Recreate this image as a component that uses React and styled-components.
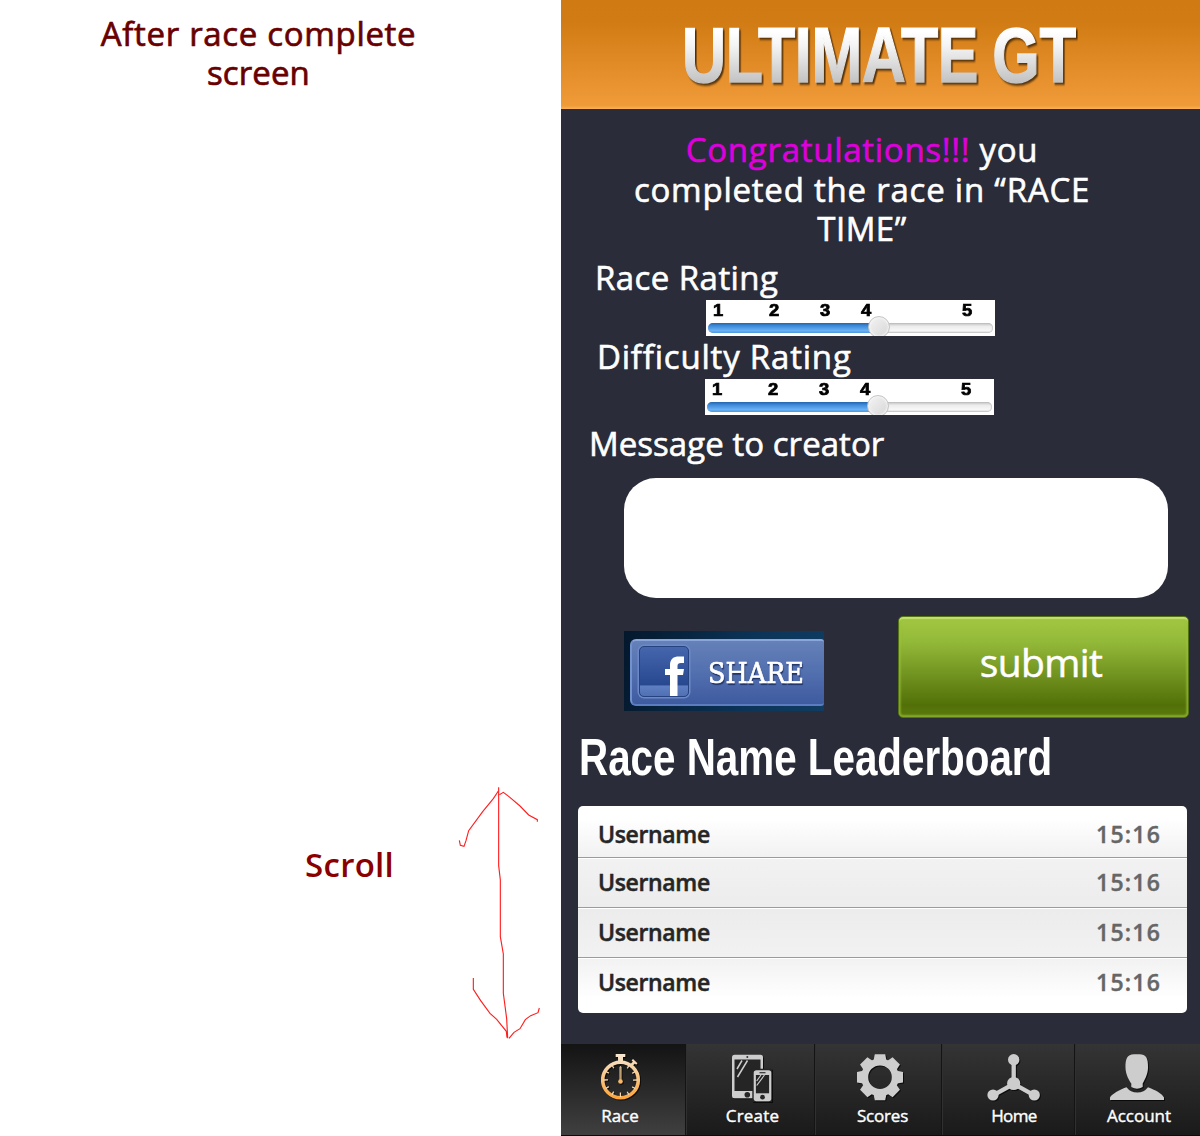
import React from "react";
import styled, { createGlobalStyle } from "styled-components";

const Global = createGlobalStyle`
  * { box-sizing: border-box; }
  body { margin: 0; background: #fff; font-family: "Open Sans", "Noto Sans", sans-serif; }
  h1, h2, p { margin: 0; font-weight: 400; }
`;

const Page = styled.div`
  display: grid;
  grid-template-columns: 561px 639px;
  width: 1200px;
  height: 1136px;
  overflow: hidden;
`;

/* ---------- annotations ---------- */
const Notes = styled.aside`
  display: flex;
  flex-direction: column;
  justify-content: space-between;
  padding: 14px 0 86px;
`;

const Line = styled.span`
  display: block;
  white-space: nowrap;
  letter-spacing: ${(p) => p.$track}px;
`;

const NoteTitle = styled.p`
  width: 517px;
  text-align: center;
  font-size: 33px;
  line-height: 39px;
  color: #690000;
  -webkit-text-stroke: 0.7px #690000;
`;

const ScrollNote = styled.div`
  display: flex;
  align-items: flex-start;
  justify-content: space-between;
  padding: 0 1px 0 305px;
`;

const ScrollLabel = styled.p`
  padding-top: 65px;
  font-size: 33px;
  font-weight: 600;
  line-height: 39px;
  letter-spacing: 0.3px;
  color: #8a0000;
`;

/* ---------- phone screen ---------- */
const Phone = styled.main`
  display: flex;
  flex-direction: column;
  background: #2a2d39;
  color: #fff;
`;

const Header = styled.header`
  display: flex;
  height: 109px;
  padding: 10px 0 0 121px;
  background: linear-gradient(#cf7a12 0, #d07b13 20%, #f09b39 97%, #ffb055 100%);
`;

const Logo = styled.h1`
  font: 700 78px/90px "Liberation Sans", Arial, sans-serif;
  white-space: nowrap;
  letter-spacing: -0.5px;
  word-spacing: -3px;
  transform: scaleX(0.782);
  transform-origin: left;
  color: transparent;
  -webkit-text-stroke: 1.4px transparent;
  background: linear-gradient(#fff 22%, #f4f4f4 36%, #b9b9b9 80%);
  background-clip: text;
  -webkit-background-clip: text;
  filter: drop-shadow(2px 2px 1px rgba(50, 25, 0, 0.8));
`;

const Content = styled.section`
  display: flex;
  flex-direction: column;
  height: 935px;
`;

const Congrats = styled.p`
  width: 602px;
  padding-top: 21px;
  text-align: center;
  font-size: 33px;
  line-height: 39.5px;
  -webkit-text-stroke: 0.6px currentColor;
`;

const Highlight = styled.span`
  color: #dd00dd;
`;

const FieldLabel = styled.p`
  height: 39px;
  margin: ${(p) => p.$top || 0}px 0 ${(p) => p.$bottom || 4}px ${(p) => p.$left}px;
  font-size: 33px;
  line-height: 41px;
  letter-spacing: ${(p) => p.$track}px;
  -webkit-text-stroke: 0.6px #fff;
`;

const SliderBox = styled.div`
  width: 289px;
  height: 36px;
  margin-left: ${(p) => p.$left}px;
  padding: 3px 2px 0;
  background: #fff;
  overflow: hidden;
`;

const Ticks = styled.div`
  display: flex;
  height: 20px;
  color: #000;
`;

const Tick = styled.span`
  width: 20px;
  margin-left: ${(p) => p.$gap}px;
  text-align: center;
  font: 700 16px/15px "Liberation Sans", Arial, sans-serif;
  transform: scaleX(1.15);
  -webkit-text-stroke: 0.7px #000;
`;

const Track = styled.div`
  position: relative;
  height: 10px;
  border-radius: 5px;
  background: linear-gradient(#c4c4c4, #ededed 35%, #f7f7f7 75%, #dcdcdc);
  box-shadow: inset 0 0 1px 0.5px #b5b5b5;
`;

const Fill = styled.div`
  width: 60%;
  height: 10px;
  border-radius: 5px 0 0 5px;
  background: linear-gradient(#2465ad, #3f8bdc 30%, #69b1f3 75%, #4d98e0);
`;

const Knob = styled.div`
  position: absolute;
  left: 160px;
  top: -7px;
  width: 22px;
  height: 22px;
  border: 1px solid #c6c6c6;
  border-radius: 50%;
  background: linear-gradient(135deg, #f4f4f4, #d6d6d6);
  box-shadow: inset 0 0 2px 1px #f6f6f6;
`;

const MessageBox = styled.textarea`
  display: block;
  width: 544px;
  height: 120px;
  margin: 0 0 0 63px;
  padding: 20px 24px;
  border: 0;
  border-radius: 32px;
  background: #fff;
  resize: none;
  outline: none;
  font: inherit;
`;

const Actions = styled.div`
  display: flex;
  justify-content: space-between;
  padding: 18px 11px 0 63px;
`;

const ShareFrame = styled.div`
  width: 200px;
  height: 80px;
  margin-top: 15px;
  padding: 8px 0 4px 6px;
  background: linear-gradient(100deg, #04182c, #0b3357 60%, #103c62);
`;

const ShareButton = styled.button`
  display: flex;
  width: 194px;
  height: 67px;
  padding: 7px 0 0 8px;
  border: 2px solid #7191cf;
  border-top-color: #8ba6dc;
  border-bottom-color: #5c7cc0;
  border-right-width: 0;
  border-radius: 6px 3px 3px 6px;
  background: linear-gradient(#6681b8, #5471b0 45%, #3f5ba0);
  color: #fff;
`;

const FbTile = styled.span`
  display: block;
  width: 50px;
  height: 51px;
  margin-top: -2px;
  margin-left: -1px;
  border: 1px solid #27437f;
  border-radius: 5px;
  background: linear-gradient(#4566ad 0, #27488e 78%, #5f7fc3 79%, #5170b4 100%);
  box-shadow: 0 0 0 1.5px #6b89c8;
  flex: none;
`;

const ShareText = styled.span`
  margin: 11px 0 0 19px;
  font: 400 27px/30px "DejaVu Serif", serif;
  transform: scaleX(0.945);
  transform-origin: left;
  -webkit-text-stroke: 0.7px #fff;
  text-shadow: 1px 2px 1px #1d3164;
`;

const SubmitButton = styled.button`
  width: 291px;
  height: 102px;
  padding: 0 5px 10px 0;
  border: 1px solid #547314;
  border-radius: 5px;
  background: linear-gradient(#a0c641 3%, #93b939 25%, #527008 88%, #5a7a0b);
  box-shadow: inset 0 2px 1px #c3e070, inset 0 -2px 2px #85a92c, inset 2px 0 2px rgba(160, 200, 60, 0.5),
    inset -2px 0 2px rgba(160, 200, 60, 0.5);
  color: #fff;
  font: 400 39px/50px "Open Sans", sans-serif;
  letter-spacing: -0.6px;
  -webkit-text-stroke: 0.5px #fff;
`;

const BoardTitle = styled.h2`
  width: 620px;
  height: 60px;
  margin: 9px 0 0 18px;
  font: 700 52px/60px "Liberation Sans", Arial, sans-serif;
  white-space: nowrap;
  transform: scaleX(0.776);
  transform-origin: left;
`;

const Board = styled.div`
  display: grid;
  grid-template-rows: 52px 50px 50px 55px;
  width: 609px;
  height: 207px;
  margin: 19px 0 0 17px;
  border-radius: 5px;
  background: linear-gradient(#fff 6%, #f2f2f2 24%, #ececec 50%, #f2f2f2 74%, #fff 93%);
  overflow: hidden;
`;

const Row = styled.div`
  display: flex;
  justify-content: space-between;
  padding: ${(p) => (p.$first ? 12 : 8)}px 26px 0 20px;
  border-bottom: ${(p) => (p.$last ? 0 : 1)}px solid #9b9b9b;
  box-shadow: ${(p) => (p.$first ? "none" : "inset 0 1px 0 #fff")};
  font-size: 23px;
  font-weight: 600;
  line-height: 32px;
`;

const User = styled.span`
  color: #262626;
  letter-spacing: -0.35px;
  -webkit-text-stroke: 0.5px #262626;
`;

const Time = styled.span`
  color: #666;
  letter-spacing: 1.2px;
  -webkit-text-stroke: 0.4px #666;
`;

/* ---------- tab bar ---------- */
const TabBar = styled.nav`
  display: grid;
  grid-template-columns: 124px 129px 127px 133px 126px;
  height: 92px;
  background: #222;
`;

const Tab = styled.a`
  display: flex;
  flex-direction: column;
  align-items: center;
  padding-top: 10px;
  background: ${(p) =>
    p.$active ? "linear-gradient(#131313, #404040)" : "linear-gradient(#343434, #1a1a1a)"};
  box-shadow: ${(p) => (p.$active ? "none" : "inset 1px 0 0 #141414, inset 2px 0 0 #303030")};
  border-bottom: 1px solid #0c0c0c;
`;

const IconSlot = styled.span`
  display: flex;
  height: 50px;
  margin-left: ${(p) => p.$shift}px;
  filter: drop-shadow(1px 1px 0 rgba(0, 0, 0, 0.7));
`;

const TabLabel = styled.span`
  margin: 1px 0 0 ${(p) => p.$shift}px;
  color: #fff;
  font-size: 17px;
  line-height: 22px;
  letter-spacing: ${(p) => p.$track}px;
  -webkit-text-stroke: 0.4px #fff;
`;

const GREY = "#cdcdcd";

function ScrollArrow() {
  return (
    <svg width="120" height="270" viewBox="0 0 360 810" fill="none" stroke="#ff1e1e" strokeWidth="3.4">
      <path d="M176 22V257L181 300V470L190 522V640L200 716L203 775" />
      <path d="M175 33L160 56L128 95L86 152L78 182L72 199L61 196L58 181" />
      <path d="M178 44L190 37L207 50L240 78L266 105L292 119V125" />
      <path d="M100 594V628L122 662L150 700L170 718L199 754L201 773" />
      <path d="M207 775L222 757L240 746L256 719L272 707L294 698L298 684" />
    </svg>
  );
}

function FacebookF() {
  return (
    <svg width="48" height="49" viewBox="0 0 48 49">
      <path
        fill="#fff"
        d="M30 49V28H25V22H30V18C30 12 33.500 9.500 39 9.500H44V16H41C38.500 16 37.500 17 37.500 19V22H44L43 28H37.500V49Z"
      />
    </svg>
  );
}

function StopwatchIcon() {
  const ticks = [30, 60, 90, 120, 150, 180, 210, 240, 270, 300, 330];
  return (
    <svg width="40" height="47" viewBox="0 0 40 47">
      <defs>
        <linearGradient id="amber" gradientUnits="userSpaceOnUse" x1="0" y1="0" x2="0" y2="46">
          <stop offset="0" stopColor="#f7e6d2" />
          <stop offset="0.45" stopColor="#f8c98c" />
          <stop offset="1" stopColor="#ffa235" />
        </linearGradient>
      </defs>
      <g fill="none" stroke="url(#amber)">
        <circle cx="19.5" cy="26" r="17.800" strokeWidth="3.600" />
        <path strokeWidth="3" d="M14.700 1.500L24.300 1.600" />
        <path strokeWidth="5" d="M19.500 2L19.600 8" />
        <path strokeWidth="2.600" d="M29.500 12L33.500 8" />
        <path strokeWidth="2" d="M31.300 5.800L35.800 10" />
        <path strokeWidth="1" d="M19 12.800H20V27H19Z" />
        {ticks.map((a) => (
          <path
            key={a}
            strokeWidth="1.300"
            transform={`rotate(${a} 19.5 26)`}
            d={a % 90 ? "M19.5 9L19.6 12.500" : "M19.5 9L19.6 13.500"}
          />
        ))}
      </g>
      <circle cx="19.5" cy="27.500" r="2.300" fill="#fbb765" />
    </svg>
  );
}

function DevicesIcon() {
  return (
    <svg width="40" height="48" viewBox="0 0 40 48">
      <rect x="0" y="0.7" width="31" height="43.500" rx="2.500" fill={GREY} />
      <rect x="2.500" y="5.500" width="26" height="31.500" fill="#252525" />
      <circle cx="15.300" cy="3" r="1" fill="#333" />
      <circle cx="15.300" cy="40.700" r="2.800" fill="#262626" />
      <path d="M5 15L10 6.500M5.500 23L15.500 6.500" stroke={GREY} strokeWidth="1.500" />
      <rect x="20.300" y="14.700" width="20" height="34" fill="#252525" />
      <rect x="21.700" y="16.300" width="17.600" height="31" rx="2.800" fill={GREY} />
      <rect x="23.900" y="21" width="13.200" height="18.300" fill="#252525" />
      <path d="M27.500 18.700H33.500" stroke="#333" strokeWidth="1.200" />
      <circle cx="30.500" cy="43.200" r="2.400" fill="#262626" />
      <path d="M24.700 27L29 21M24.700 31.500L32.500 21" stroke={GREY} strokeWidth="1.200" />
    </svg>
  );
}

function GearIcon() {
  return (
    <svg width="48" height="47" viewBox="-24 -23.2 48 47">
      <circle r="15.300" fill="none" stroke={GREY} strokeWidth="7" />
      {[0, 45, 90, 135, 180, 225, 270, 315].map((a) => (
        <path key={a} transform={`rotate(${a})`} fill={GREY} d="M-6.400 -17L-5.200 -23H5.200L6.400 -17Z" />
      ))}
    </svg>
  );
}

function NodesIcon() {
  return (
    <svg width="54" height="48" viewBox="0 0 54 48">
      <path d="M26.700 6V30L6 41.300M26.700 30L47.300 41.300" fill="none" stroke={GREY} strokeWidth="4.300" />
      <g fill={GREY}>
        <circle cx="26.700" cy="29.500" r="6.600" />
        <circle cx="26.700" cy="5.700" r="5.700" />
        <circle cx="6" cy="41" r="5.600" />
        <circle cx="47.300" cy="41" r="5.600" />
      </g>
    </svg>
  );
}

function PersonIcon() {
  return (
    <svg width="54" height="47" viewBox="0 0 54 47" fill={GREY}>
      <path d="M15.500 14C15.300 5 17 .3 24 .3H29.500C36 .3 38.300 4 38 14C37.800 21 34 27 32.700 29.500V33Q27 36.500 21.300 33V29.500C19.500 27 15.700 21 15.500 14Z" />
      <path d="M0 46V43.500C2 40 9 36 16.500 33.300Q20.500 38.500 27.300 38.500T38 33.300C45 36 52 39.500 54 43.500V46Z" />
    </svg>
  );
}

const TICKS = [
  [1, 0],
  [2, 35.8],
  [3, 31.5],
  [4, 20.8],
  [5, 81.2],
];

const TIMES = ["15:16", "15:16", "15:16", "15:16"];

const TABS = [
  { label: "Race", icon: StopwatchIcon, iconShift: -5, labelShift: -6, track: 0, active: true },
  { label: "Create", icon: DevicesIcon, iconShift: 4, labelShift: 6, track: 0.2 },
  { label: "Scores", icon: GearIcon, iconShift: 5, labelShift: 10, track: -0.2 },
  { label: "Home", icon: NodesIcon, iconShift: 13, labelShift: 13, track: -0.6 },
  { label: "Account", icon: PersonIcon, iconShift: -1, labelShift: 4, track: 0 },
];

function RatingSlider({ left }) {
  return (
    <SliderBox $left={left}>
      <Ticks>
        {TICKS.map(([n, gap]) => (
          <Tick key={n} $gap={gap}>
            {n}
          </Tick>
        ))}
      </Ticks>
      <Track>
        <Fill />
        <Knob />
      </Track>
    </SliderBox>
  );
}

export default function App() {
  return (
    <Page>
      <Global />
      <Notes>
        <NoteTitle>
          <Line $track={0.68}>After race complete</Line>
          <Line $track={0.1}>screen</Line>
        </NoteTitle>
        <ScrollNote>
          <ScrollLabel>Scroll</ScrollLabel>
          <ScrollArrow />
        </ScrollNote>
      </Notes>

      <Phone>
        <Header>
          <Logo>ULTIMATE GT</Logo>
        </Header>
        <Content>
          <Congrats>
            <Line $track={0.72}>
              <Highlight>Congratulations!!!</Highlight> you
            </Line>
            <Line $track={0.78}>completed the race in “RACE</Line>
            <Line $track={0.5}>TIME”</Line>
          </Congrats>

          <FieldLabel $top={8.5} $bottom={4} $left={34} $track={0.44}>
            Race Rating
          </FieldLabel>
          <RatingSlider left={145} />
          <FieldLabel $bottom={4} $left={36} $track={0.8}>
            Difficulty Rating
          </FieldLabel>
          <RatingSlider left={144} />
          <FieldLabel $top={8} $bottom={16} $left={28} $track={0.05}>
            Message to creator
          </FieldLabel>
          <MessageBox aria-label="Message to creator" />

          <Actions>
            <ShareFrame>
              <ShareButton>
                <FbTile>
                  <FacebookF />
                </FbTile>
                <ShareText>SHARE</ShareText>
              </ShareButton>
            </ShareFrame>
            <SubmitButton>submit</SubmitButton>
          </Actions>

          <BoardTitle>Race Name Leaderboard</BoardTitle>
          <Board>
            {TIMES.map((time, i) => (
              <Row key={i} $first={i === 0} $last={i === TIMES.length - 1}>
                <User>Username</User>
                <Time>{time}</Time>
              </Row>
            ))}
          </Board>
        </Content>

        <TabBar>
          {TABS.map(({ label, icon: Icon, iconShift, labelShift, track, active }) => (
            <Tab key={label} $active={active}>
              <IconSlot $shift={iconShift}>
                <Icon />
              </IconSlot>
              <TabLabel $shift={labelShift} $track={track}>
                {label}
              </TabLabel>
            </Tab>
          ))}
        </TabBar>
      </Phone>
    </Page>
  );
}
